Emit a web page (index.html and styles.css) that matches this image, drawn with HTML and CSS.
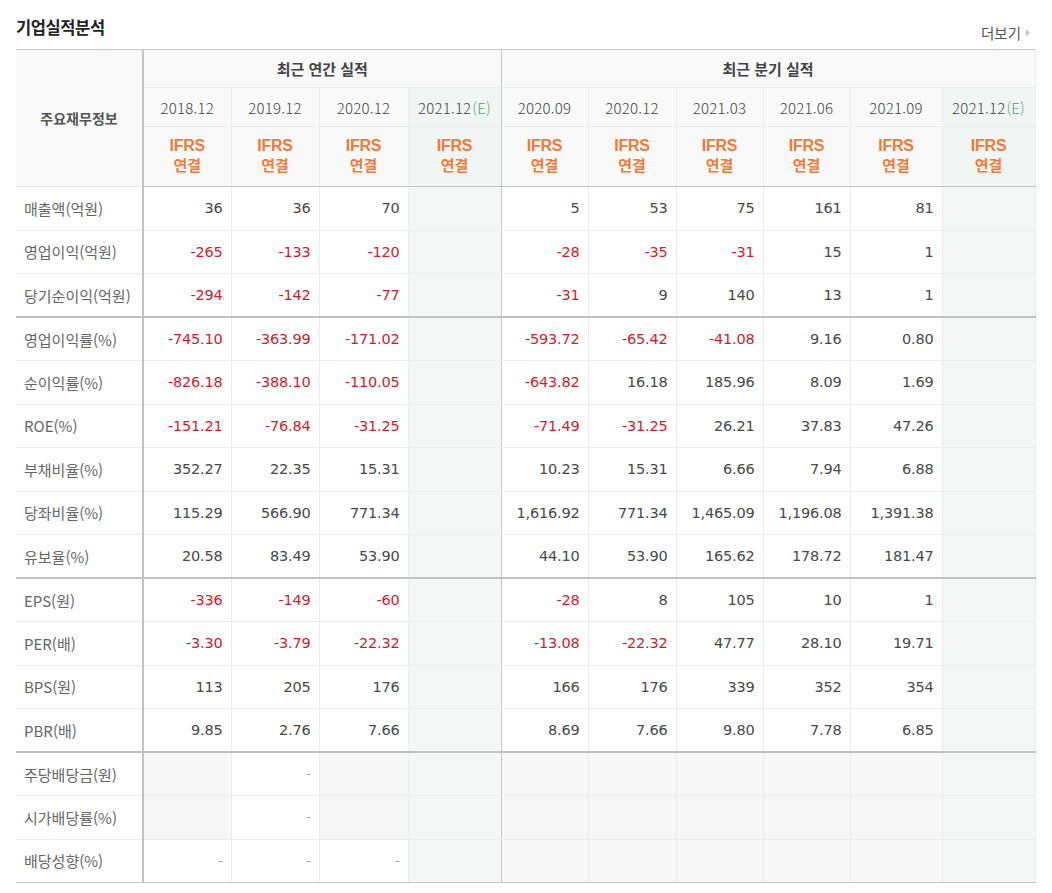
FILE: index.html
```html
<!DOCTYPE html>
<html lang="ko">
<head>
<meta charset="utf-8">
<title>기업실적분석</title>
<link rel="stylesheet" href="styles.css">
</head>
<body>
<div class="wrap">
  <div class="head">
    <h2 class="title">기업실적분석</h2>
    <a class="more" href="#">더보기<span class="arr"></span></a>
  </div>
  <table class="perf">
    <colgroup>
      <col class="c-lbl">
      <col style="width:88px"><col style="width:88px"><col style="width:89px"><col style="width:93px">
      <col style="width:87px"><col style="width:88px"><col style="width:87px"><col style="width:87px"><col style="width:92px"><col style="width:93px">
    </colgroup>
    <thead>
      <tr class="h1">
        <th rowspan="3" class="lblh">주요재무정보</th>
        <th colspan="4" class="grph sep">최근 연간 실적</th>
        <th colspan="6" class="grph">최근 분기 실적</th>
      </tr>
      <tr class="h2">
        <th class="yr">2018.12</th>
        <th class="yr">2019.12</th>
        <th class="yr">2020.12</th>
        <th class="yr est sep">2021.12<em>(E)</em></th>
        <th class="yr">2020.09</th>
        <th class="yr">2020.12</th>
        <th class="yr">2021.03</th>
        <th class="yr">2021.06</th>
        <th class="yr">2021.09</th>
        <th class="yr est">2021.12<em>(E)</em></th>
      </tr>
      <tr class="h3">
        <th class="ifrs"><span class="i1">IFRS</span><span class="i2">연결</span></th>
        <th class="ifrs"><span class="i1">IFRS</span><span class="i2">연결</span></th>
        <th class="ifrs"><span class="i1">IFRS</span><span class="i2">연결</span></th>
        <th class="ifrs est sep"><span class="i1">IFRS</span><span class="i2">연결</span></th>
        <th class="ifrs"><span class="i1">IFRS</span><span class="i2">연결</span></th>
        <th class="ifrs"><span class="i1">IFRS</span><span class="i2">연결</span></th>
        <th class="ifrs"><span class="i1">IFRS</span><span class="i2">연결</span></th>
        <th class="ifrs"><span class="i1">IFRS</span><span class="i2">연결</span></th>
        <th class="ifrs"><span class="i1">IFRS</span><span class="i2">연결</span></th>
        <th class="ifrs est"><span class="i1">IFRS</span><span class="i2">연결</span></th>
      </tr>
    </thead>
    <tbody>
      <tr><th>매출액(억원)</th><td>36</td><td>36</td><td>70</td><td class="est sep"></td><td>5</td><td>53</td><td>75</td><td>161</td><td>81</td><td class="est"></td></tr>
      <tr><th>영업이익(억원)</th><td class="neg">-265</td><td class="neg">-133</td><td class="neg">-120</td><td class="est sep"></td><td class="neg">-28</td><td class="neg">-35</td><td class="neg">-31</td><td>15</td><td>1</td><td class="est"></td></tr>
      <tr><th>당기순이익(억원)</th><td class="neg">-294</td><td class="neg">-142</td><td class="neg">-77</td><td class="est sep"></td><td class="neg">-31</td><td>9</td><td>140</td><td>13</td><td>1</td><td class="est"></td></tr>
      <tr class="grp"><th>영업이익률(%)</th><td class="neg">-745.10</td><td class="neg">-363.99</td><td class="neg">-171.02</td><td class="est sep"></td><td class="neg">-593.72</td><td class="neg">-65.42</td><td class="neg">-41.08</td><td>9.16</td><td>0.80</td><td class="est"></td></tr>
      <tr><th>순이익률(%)</th><td class="neg">-826.18</td><td class="neg">-388.10</td><td class="neg">-110.05</td><td class="est sep"></td><td class="neg">-643.82</td><td>16.18</td><td>185.96</td><td>8.09</td><td>1.69</td><td class="est"></td></tr>
      <tr><th>ROE(%)</th><td class="neg">-151.21</td><td class="neg">-76.84</td><td class="neg">-31.25</td><td class="est sep"></td><td class="neg">-71.49</td><td class="neg">-31.25</td><td>26.21</td><td>37.83</td><td>47.26</td><td class="est"></td></tr>
      <tr><th>부채비율(%)</th><td>352.27</td><td>22.35</td><td>15.31</td><td class="est sep"></td><td>10.23</td><td>15.31</td><td>6.66</td><td>7.94</td><td>6.88</td><td class="est"></td></tr>
      <tr><th>당좌비율(%)</th><td>115.29</td><td>566.90</td><td>771.34</td><td class="est sep"></td><td>1,616.92</td><td>771.34</td><td>1,465.09</td><td>1,196.08</td><td>1,391.38</td><td class="est"></td></tr>
      <tr><th>유보율(%)</th><td>20.58</td><td>83.49</td><td>53.90</td><td class="est sep"></td><td>44.10</td><td>53.90</td><td>165.62</td><td>178.72</td><td>181.47</td><td class="est"></td></tr>
      <tr class="grp"><th>EPS(원)</th><td class="neg">-336</td><td class="neg">-149</td><td class="neg">-60</td><td class="est sep"></td><td class="neg">-28</td><td>8</td><td>105</td><td>10</td><td>1</td><td class="est"></td></tr>
      <tr><th>PER(배)</th><td class="neg">-3.30</td><td class="neg">-3.79</td><td class="neg">-22.32</td><td class="est sep"></td><td class="neg">-13.08</td><td class="neg">-22.32</td><td>47.77</td><td>28.10</td><td>19.71</td><td class="est"></td></tr>
      <tr><th>BPS(원)</th><td>113</td><td>205</td><td>176</td><td class="est sep"></td><td>166</td><td>176</td><td>339</td><td>352</td><td>354</td><td class="est"></td></tr>
      <tr><th>PBR(배)</th><td>9.85</td><td>2.76</td><td>7.66</td><td class="est sep"></td><td>8.69</td><td>7.66</td><td>9.80</td><td>7.78</td><td>6.85</td><td class="est"></td></tr>
      <tr class="grp"><th>주당배당금(원)</th><td class="nil"></td><td class="dash">-</td><td class="nil"></td><td class="est sep"></td><td class="nil"></td><td class="nil"></td><td class="nil"></td><td class="nil"></td><td class="nil"></td><td class="est"></td></tr>
      <tr><th>시가배당률(%)</th><td class="nil"></td><td class="dash">-</td><td class="nil"></td><td class="est sep"></td><td class="nil"></td><td class="nil"></td><td class="nil"></td><td class="nil"></td><td class="nil"></td><td class="est"></td></tr>
      <tr class="last"><th>배당성향(%)</th><td class="dash">-</td><td class="dash">-</td><td class="dash">-</td><td class="est sep"></td><td class="nil"></td><td class="nil"></td><td class="nil"></td><td class="nil"></td><td class="nil"></td><td class="est"></td></tr>
    </tbody>
  </table>
</div>
</body>
</html>
```
FILE: styles.css
```css
html, body {
  margin: 0;
  padding: 0;
  background: #fff;
}
body {
  font-family: "Noto Sans CJK KR", "Noto Sans", sans-serif;
  color: #333;
}
.wrap {
  width: 1019px;
  padding: 0 0 0 16px;
}
.head {
  display: flex;
  justify-content: space-between;
  align-items: flex-end;
  height: 49px;
}
.title {
  margin: 0 0 13px 0;
  font-size: 16.5px;
  font-weight: 700;
  color: #222;
  letter-spacing: -0.4px;
  line-height: 18px;
}
.more {
  margin: 0 5px 8px 0;
  font-size: 14.5px;
  color: #555;
  text-decoration: none;
  line-height: 16px;
  display: flex;
  align-items: center;
}
.arr {
  display: inline-block;
  width: 0;
  height: 0;
  margin-left: 5px;
  border-left: 4px solid #c8c8c8;
  border-top: 4px solid transparent;
  border-bottom: 4px solid transparent;
}
.perf {
  width: 1019px;
  table-layout: fixed;
  border-collapse: collapse;
  border-top: 1px solid #c4c4c4;
  border-bottom: 1px solid #c4c4c4;
}
.c-lbl {
  width: 127px;
}
.perf th, .perf td {
  padding: 0;
  border: 1px solid #ececec;
}
.perf thead th {
  background: #f9f9f9;
}
.perf th.lblh {
  font-size: 14px;
  font-weight: 700;
  color: #555;
  letter-spacing: 0;
  border-left: none;
  border-right: 2px solid #c2c2c2;
}
.perf tr.h1 th {
  height: 37px;
  border-top: none;
}
.perf th.grph {
  font-size: 15px;
  font-weight: 700;
  color: #444;
  letter-spacing: 0;
}
.perf th.sep, .perf td.sep {
  border-right: 1px solid #c8c8c8;
}
.perf tr.h2 th {
  height: 38px;
}
.perf th.yr {
  font-size: 15px;
  font-weight: 300;
  color: #444;
  letter-spacing: 0.2px;
}
.perf th.yr em {
  font-style: normal;
  color: #5aa36f;
  margin-left: 1px;
}
.perf tr.h3 th {
  height: 58px;
  border-bottom: 1px solid #c4c4c4;
}
.perf th.ifrs {
  color: #f0793c;
  font-weight: 700;
  padding-bottom: 1px;
}
.ifrs .i1 {
  display: block;
  font-family: "Liberation Sans", "Noto Sans", sans-serif;
  font-size: 16px;
  line-height: 18px;
  letter-spacing: -0.2px;
}
.ifrs .i2 {
  display: block;
  font-size: 15px;
  line-height: 20px;
}
.perf thead th.est {
  background: #f1f5f3;
}
.perf tbody tr {
  height: 43.5px;
}
.perf tbody th {
  background: #fff;
  text-align: left;
  padding-left: 8px;
  font-size: 15px;
  font-weight: 400;
  color: #666;
  letter-spacing: 0;
  border-left: none;
  border-right: 2px solid #c2c2c2;
  white-space: nowrap;
}
.perf td {
  text-align: right;
  padding-right: 8px;
  font-family: "DejaVu Sans", "Noto Sans", sans-serif;
  font-size: 14.5px;
  color: #484848;
  letter-spacing: -0.2px;
}
.perf td.neg {
  color: #d01c2a;
}
.perf td.est {
  background: #f4f7f6;
}
.perf td.nil {
  background: #f7f7f7;
}
.perf td.dash {
  color: #999;
  font-size: 12px;
}
.perf tr.grp th, .perf tr.grp td {
  border-top: 2px solid #c2c2c2;
}
.perf tr.last th, .perf tr.last td {
  border-bottom: 1px solid #c4c4c4;
}
```
